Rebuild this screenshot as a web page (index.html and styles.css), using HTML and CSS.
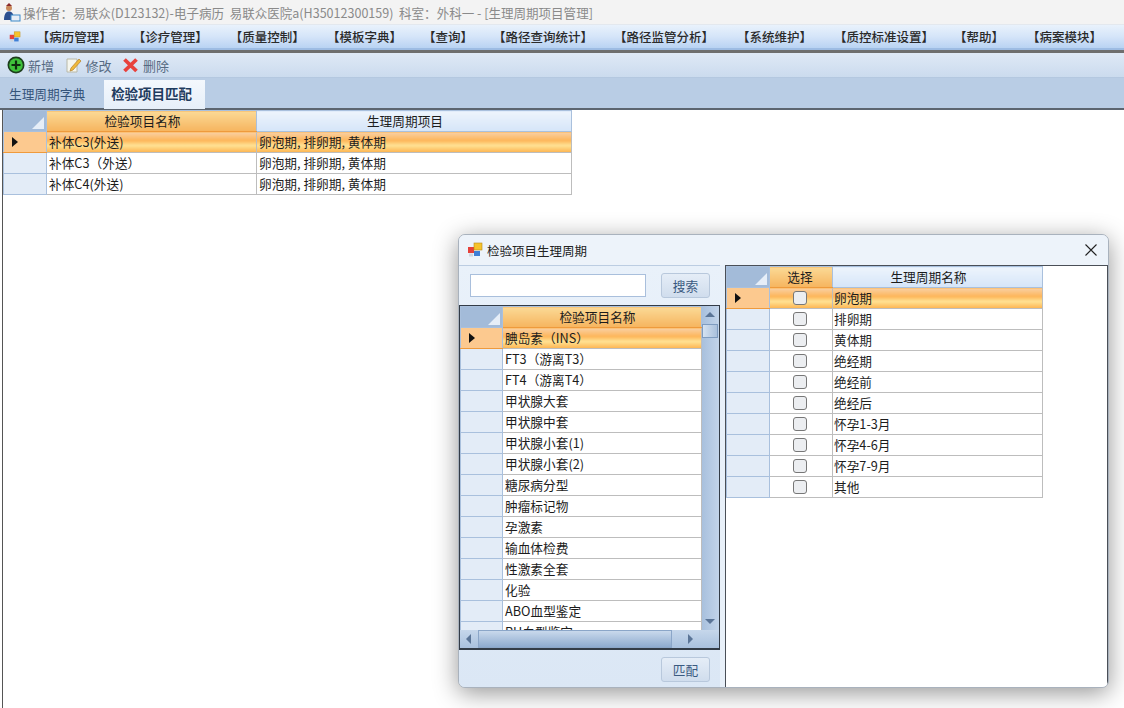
FILE: index.html
```html
<!DOCTYPE html>
<html lang="zh-CN">
<head>
    <meta charset="UTF-8">
    <title>生理周期项目管理</title>
    <link rel="stylesheet" href="styles.css">
</head>
<body>
    <svg class="defs" width="0" height="0">
        <symbol id="appIcon" viewBox="0 0 16 16">
            <rect x="1" y="5" width="6" height="6" fill="#e5413a"/>
            <rect x="7" y="1" width="8" height="7" fill="#f6c32c" stroke="#b98a1a" stroke-width="0.6"/>
            <rect x="7" y="9" width="6" height="5" fill="#3f7fd6"/>
            <rect x="2" y="11.5" width="4" height="3" fill="#cfd6df"/>
        </symbol>
    </svg>

    <div class="titlebar">
        <svg class="person" width="18" height="20" viewBox="0 0 18 20">
            <circle cx="6" cy="6" r="3" fill="#c98a5c"/>
            <path d="M3 4 L6 1 L9 4 Z" fill="#8a2a2a"/>
            <path d="M1 18 C1 12 3 9.500 6 9.500 C9 9.500 11 12 11 18 Z" fill="#2c4f8f"/>
            <rect x="8" y="13" width="9" height="6" fill="#e8eef6" stroke="#3d8ac9"/>
        </svg>
        <span>操作者：易联众(D123132)-电子病历&nbsp;&nbsp;易联众医院a(H35012300159)&nbsp;&nbsp;科室：外科一 - [生理周期项目管理]</span>
    </div>

    <nav class="menubar">
        <svg class="menu-icon" width="16" height="16"><use href="#appIcon"/></svg>
        <a class="m1">【病历管理】</a>
        <a class="m2">【诊疗管理】</a>
        <a class="m3">【质量控制】</a>
        <a class="m4">【模板字典】</a>
        <a class="m5">【查询】</a>
        <a class="m6">【路径查询统计】</a>
        <a class="m7">【路径监管分析】</a>
        <a class="m8">【系统维护】</a>
        <a class="m9">【质控标准设置】</a>
        <a class="m10">【帮助】</a>
        <a class="m11">【病案模块】</a>
    </nav>

    <div class="toolbar">
        <span class="tool">
            <svg width="18" height="18" viewBox="0 0 18 18">
                <circle cx="9" cy="9" r="8.500" fill="#1d3d1d"/>
                <circle cx="9" cy="9" r="6.800" fill="#3fc23a"/>
                <path d="M9 4.500 V13.500 M4.500 9 H13.500" stroke="#0f2c0f" stroke-width="2.200"/>
            </svg>新增
        </span>
        <span class="tool">
            <svg width="18" height="18" viewBox="0 0 18 18">
                <path d="M2 3 H12 V16 H2 Z" fill="#f5f6ee" stroke="#b8b8a8"/>
                <path d="M6 12 L14 3 L16 5 L8 14 L5 15 Z" fill="#f0b93a" stroke="#b5812a" stroke-width="0.7"/>
            </svg>修改
        </span>
        <span class="tool">
            <svg width="18" height="18" viewBox="0 0 18 18">
                <path d="M2.500 3.500 L14.500 15 M14.500 3.500 L2.500 15" stroke="#e8413c" stroke-width="3.800"/>
            </svg>删除
        </span>
    </div>

    <div class="tabs">
        <span class="tab">生理周期字典</span>
        <span class="tab tab-active">检验项目匹配</span>
    </div>

    <main class="content">
        <table class="grid main-grid">
            <tr>
                <th class="corner"></th>
                <th class="head-on">检验项目名称</th>
                <th>生理周期项目</th>
            </tr>
            <tr class="on">
                <td class="rowhead"><i class="arrow"></i></td>
                <td>补体C3(外送)</td>
                <td>卵泡期, 排卵期, 黄体期</td>
            </tr>
            <tr>
                <td class="rowhead"></td>
                <td>补体C3（外送）</td>
                <td>卵泡期, 排卵期, 黄体期</td>
            </tr>
            <tr>
                <td class="rowhead"></td>
                <td>补体C4(外送)</td>
                <td>卵泡期, 排卵期, 黄体期</td>
            </tr>
        </table>
    </main>

    <section class="dialog">
        <header class="dialog-title">
            <svg width="16" height="16"><use href="#appIcon"/></svg>
            <span>检验项目生理周期</span>
            <svg class="close" width="12" height="12" viewBox="0 0 12 12">
                <path d="M0.500 0.500 L11.500 11.500 M11.500 0.500 L0.500 11.500" stroke="#222" stroke-width="1.100"/>
            </svg>
        </header>
        <div class="dialog-body">
            <div class="left-pane">
                <div class="search-row">
                    <input class="search-box" type="text">
                    <button class="btn">搜索</button>
                </div>
                <div class="list-wrap">
                    <div class="list-view">
                        <table class="grid list-grid">
                            <tr>
                                <th class="corner"></th>
                                <th class="head-on">检验项目名称</th>
                            </tr>
                            <tr class="on"><td class="rowhead"><i class="arrow"></i></td><td>腆岛素（INS）</td></tr>
                            <tr><td class="rowhead"></td><td>FT3（游离T3）</td></tr>
                            <tr><td class="rowhead"></td><td>FT4（游离T4）</td></tr>
                            <tr><td class="rowhead"></td><td>甲状腺大套</td></tr>
                            <tr><td class="rowhead"></td><td>甲状腺中套</td></tr>
                            <tr><td class="rowhead"></td><td>甲状腺小套(1)</td></tr>
                            <tr><td class="rowhead"></td><td>甲状腺小套(2)</td></tr>
                            <tr><td class="rowhead"></td><td>糖尿病分型</td></tr>
                            <tr><td class="rowhead"></td><td>肿瘤标记物</td></tr>
                            <tr><td class="rowhead"></td><td>孕激素</td></tr>
                            <tr><td class="rowhead"></td><td>输血体检费</td></tr>
                            <tr><td class="rowhead"></td><td>性激素全套</td></tr>
                            <tr><td class="rowhead"></td><td>化验</td></tr>
                            <tr><td class="rowhead"></td><td>ABO血型鉴定</td></tr>
                            <tr><td class="rowhead"></td><td>RH血型鉴定</td></tr>
                        </table>
                        <div class="vscroll">
                            <i class="tri-up"></i>
                            <span class="vthumb"></span>
                            <i class="tri-down"></i>
                        </div>
                    </div>
                    <div class="hscroll">
                        <i class="tri-left"></i>
                        <span class="hthumb"></span>
                        <i class="tri-right"></i>
                    </div>
                </div>
                <div class="match-row">
                    <button class="btn">匹配</button>
                </div>
            </div>
            <div class="right-pane">
                <table class="grid check-grid">
                    <tr>
                        <th class="corner"></th>
                        <th class="head-on">选择</th>
                        <th>生理周期名称</th>
                    </tr>
                    <tr class="on"><td class="rowhead"><i class="arrow"></i></td><td class="chk"><i class="box"></i></td><td>卵泡期</td></tr>
                    <tr><td class="rowhead"></td><td class="chk"><i class="box"></i></td><td>排卵期</td></tr>
                    <tr><td class="rowhead"></td><td class="chk"><i class="box"></i></td><td>黄体期</td></tr>
                    <tr><td class="rowhead"></td><td class="chk"><i class="box"></i></td><td>绝经期</td></tr>
                    <tr><td class="rowhead"></td><td class="chk"><i class="box"></i></td><td>绝经前</td></tr>
                    <tr><td class="rowhead"></td><td class="chk"><i class="box"></i></td><td>绝经后</td></tr>
                    <tr><td class="rowhead"></td><td class="chk"><i class="box"></i></td><td>怀孕1-3月</td></tr>
                    <tr><td class="rowhead"></td><td class="chk"><i class="box"></i></td><td>怀孕4-6月</td></tr>
                    <tr><td class="rowhead"></td><td class="chk"><i class="box"></i></td><td>怀孕7-9月</td></tr>
                    <tr><td class="rowhead"></td><td class="chk"><i class="box"></i></td><td>其他</td></tr>
                </table>
            </div>
        </div>
    </section>
</body>
</html>
```

FILE: styles.css
```css
html, body {
    margin: 0;
    padding: 0;
    height: 708px;
    overflow: hidden;
}

body {
    position: relative;
    background: #fff;
    color: #222;
    font-family: "Noto Sans CJK SC", "Noto Sans", sans-serif;
    font-size: 12.500px;
}

.defs {
    position: absolute;
}

/* window title */
.titlebar {
    height: 24px;
    display: flex;
    align-items: center;
    padding-left: 3px;
    gap: 2px;
    background: #f3f3f3;
    color: #8a8a8a;
    font-size: 12.540px;
    white-space: nowrap;
}

/* main menu */
.menubar {
    height: 26px;
    box-sizing: border-box;
    display: flex;
    align-items: center;
    padding-left: 9px;
    background: linear-gradient(to bottom, #e9f2fc, #d5e5f9 50%, #b9d3f3);
    border-top: 1px solid #e3e8ee;
    border-bottom: 2px solid #9dbce3;
    color: #2a2a2a;
    font-size: 12.500px;
    font-weight: 500;
    white-space: nowrap;
}

.menu-icon {
    margin-right: 16px;
}

.menubar a { margin-right: 22px; }
.menubar .m1 { margin-right: 21px; }
.menubar .m4 { margin-right: 21px; }
.menubar .m5 { margin-right: 20px; }
.menubar .m6 { margin-right: 21px; }
.menubar .m7 { margin-right: 23px; }
.menubar .m9 { margin-right: 20px; }
.menubar .m10 { margin-right: 23px; }

.toolbar {
    height: 28px;
    box-sizing: border-box;
    display: flex;
    align-items: center;
    gap: 10.500px;
    padding-left: 7px;
    background: linear-gradient(to bottom, #dfe9f6, #cbdbee);
    border-top: 3px solid #6e6e6e;
    border-bottom: 1px solid #b4c8e0;
    color: #566a82;
    font-size: 13px;
}

.tool {
    display: flex;
    align-items: center;
    gap: 3px;
}

.tabs {
    height: 32px;
    box-sizing: border-box;
    display: flex;
    align-items: flex-end;
    padding-left: 9px;
    background: #b9cde5;
    border-bottom: 2px solid #5c6570;
    color: #35547a;
    font-size: 12.700px;
}

.tab {
    height: 28px;
    line-height: 27px;
    margin-right: 19px;
}

.tab-active {
    height: 29px;
    margin: 0 0 -1px 0;
    padding: 0 13px 0 7px;
    background: linear-gradient(to bottom, #f4f8fd, #e6eff9);
    color: #1f3b5e;
    font-size: 13.500px;
    font-weight: 700;
}

.content {
    margin-left: 2px;
    border-left: 1px solid #555;
    height: 598px;
    box-sizing: border-box;
}

/* data grids */
.grid {
    border-collapse: collapse;
    table-layout: fixed;
    font-size: 12.700px;
    color: #1c1c1c;
}

.grid th, .grid td {
    height: 21px;
    box-sizing: border-box;
    padding: 0 0 0 2px;
    border: 1px solid #bdbdbd;
    white-space: nowrap;
    overflow: hidden;
    line-height: 18px;
}

.grid th {
    padding: 0;
    text-align: center;
    font-weight: 400;
    background: linear-gradient(to bottom, #edf4fc, #d5e5f8);
    border-color: #a9c0dd;
    border-bottom: 1px solid #a9c0dd;
}

.grid th.head-on {
    background: linear-gradient(to bottom, #fbd995, #f6b45e);
    border-bottom-color: #ef9a3c;
}

.grid th.corner {
    position: relative;
    background: #a3bbd9;
}

.corner::after {
    content: "";
    position: absolute;
    right: 2px;
    bottom: 2px;
    border-style: solid;
    border-width: 0 0 12px 12px;
    border-color: transparent transparent #e6eef8 transparent;
}

.grid td.rowhead {
    background: #e3ecf7;
    border-color: #a9c0dd;
    padding: 0;
}

.grid tr.on td {
    background: linear-gradient(to bottom, #f9cfa2, #fdb65a 40%, #ffe294 65%, #fdb34f);
}

.grid tr.on td.rowhead {
    background: #fcc98f;
    border-bottom-color: #ef9a3c;
}

.arrow {
    display: block;
    margin-left: 8px;
    width: 0;
    height: 0;
    border-style: solid;
    border-width: 5px 0 5px 6px;
    border-color: transparent transparent transparent #111;
}

.main-grid {
    width: 569px;
}

.main-grid td { padding-bottom: 1px; }
.main-grid th:nth-child(1) { width: 43px; }
.main-grid th:nth-child(2) { width: 210px; padding-right: 18px; }
.main-grid th:nth-child(3) { padding-right: 18px; }

/* dialog window */
.dialog {
    position: absolute;
    left: 458px;
    top: 234px;
    width: 651px;
    height: 454px;
    box-sizing: border-box;
    display: flex;
    flex-direction: column;
    background: #e8f0f9;
    border: 1px solid #a9b2bd;
    border-radius: 7px;
    box-shadow: 0 5px 24px rgba(0, 0, 0, 0.42);
    overflow: hidden;
}

.dialog-title {
    height: 30px;
    flex: none;
    display: flex;
    align-items: center;
    gap: 4px;
    padding-left: 8px;
    background: #edf3fa;
    color: #222;
    font-size: 12.500px;
}

.close {
    margin-left: auto;
    margin-right: 11px;
}

.dialog-body {
    flex: 1;
    display: flex;
    min-height: 0;
}

.left-pane {
    width: 261px;
    flex: none;
    display: flex;
    flex-direction: column;
    background: linear-gradient(to bottom, #e9f1fa, #dbe7f5);
}

.search-row {
    height: 40px;
    flex: none;
    display: flex;
    align-items: center;
    padding-left: 11px;
    gap: 15px;
    border-top: 1px solid #bccde2;
    box-sizing: border-box;
}

.search-box {
    width: 176px;
    height: 23px;
    box-sizing: border-box;
    background: #fff;
    border: 1px solid #a9bfdc;
    padding: 0;
}

.btn {
    width: 49px;
    height: 25px;
    padding: 0;
    background: linear-gradient(to bottom, #e5edf7, #d0dded);
    border: 1px solid #b8c8dc;
    border-radius: 3px;
    color: #3a5a80;
    font-family: inherit;
    font-size: 12.700px;
}

.list-wrap {
    height: 345px;
    flex: none;
    box-sizing: border-box;
    border: 1px solid #333c47;
    border-width: 1px 1px 2px 1px;
    background: #fff;
}

.list-view {
    height: 324px;
    display: flex;
    overflow: hidden;
}

.list-grid {
    width: 242px;
    flex: none;
    align-self: flex-start;
}

.list-grid th:nth-child(1) { width: 42px; }
.list-grid th:nth-child(2) { padding-right: 9px; }

.vscroll {
    flex: 1;
    position: relative;
    background: linear-gradient(to right, #a8c0dd, #c2d4ea);
}

.vthumb {
    position: absolute;
    left: 0;
    right: 1px;
    top: 18px;
    height: 14px;
    background: linear-gradient(to right, #d5e2f1, #a9c0dc);
    border: 1px solid #7f9cc0;
    box-sizing: border-box;
}

.tri-up, .tri-down, .tri-left, .tri-right {
    position: absolute;
    width: 0;
    height: 0;
    border-style: solid;
    border-color: transparent;
}

.tri-up {
    top: 6px;
    left: 3px;
    border-width: 0 5px 5px 5px;
    border-bottom-color: #5b7597;
}

.tri-down {
    bottom: 6px;
    left: 3px;
    border-width: 5px 5px 0 5px;
    border-top-color: #5b7597;
}

.hscroll {
    height: 18px;
    position: relative;
    background: linear-gradient(to bottom, #c6d7eb, #a9c1de);
}

.hthumb {
    position: absolute;
    left: 18px;
    width: 194px;
    top: 0;
    bottom: 0;
    background: linear-gradient(to bottom, #c9d9ec, #8eabcf);
    border: 1px solid #8ba6c8;
    box-sizing: border-box;
}

.tri-left {
    top: 4px;
    left: 6px;
    border-width: 5px 5px 5px 0;
    border-right-color: #5b7597;
}

.tri-right {
    top: 4px;
    right: 26px;
    border-width: 5px 0 5px 5px;
    border-left-color: #5b7597;
}

.match-row {
    flex: 1;
    display: flex;
    align-items: flex-start;
    justify-content: flex-end;
    padding: 7px 10px 0 0;
}

.right-pane {
    flex: 1;
    margin-left: 5px;
    background: #fff;
    border: 1px solid #4a4f57;
    border-width: 1px 1px 0 1px;
    box-sizing: border-box;
}

.check-grid {
    width: 317px;
}

.check-grid td { padding-left: 1px; }
.check-grid th:nth-child(1) { width: 43px; }
.check-grid th:nth-child(2) { width: 63px; padding-right: 2px; }
.check-grid th:nth-child(3) { padding-right: 18px; }

.grid td.chk {
    padding: 0 2px 0 0;
}

.box {
    display: block;
    width: 14px;
    height: 14px;
    box-sizing: border-box;
    margin: 0 auto;
    background: #eceef1;
    border: 1px solid #777;
    border-radius: 3px;
}
```
